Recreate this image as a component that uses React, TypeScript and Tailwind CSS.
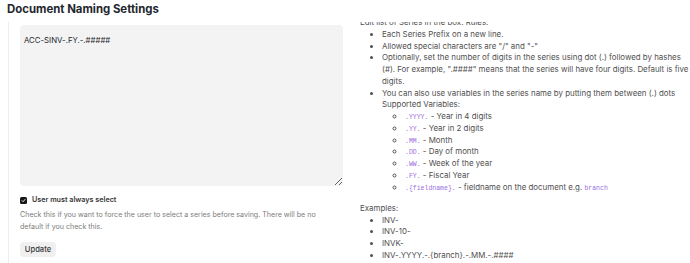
import { useState } from "react";

const font = "font-['Inter','Liberation_Sans',sans-serif]";
const code = "font-['Liberation_Mono',monospace] text-[6.5px] leading-none text-[#9d6fe0]";

const variables = [
  { key: ".YYYY.", label: "Year in 4 digits" },
  { key: ".YY.", label: "Year in 2 digits" },
  { key: ".MM.", label: "Month" },
  { key: ".DD.", label: "Day of month" },
  { key: ".WW.", label: "Week of the year" },
  { key: ".FY.", label: "Fiscal Year" },
];

const examples = ["INV-", "INV-10-", "INVK-", "INV-.YYYY.-.{branch}.-.MM.-.####"];

export default function App() {
  const [mustSelect, setMustSelect] = useState(true);

  return (
    <div className={`w-[690px] h-[263px] overflow-hidden bg-white ${font}`}>
      <div className="h-[22px] pl-[7px] text-[11.4px] leading-[18px] font-bold text-[#1f272e]">
        Document Naming Settings
      </div>

      <div className="flex">
        {/* left column */}
        <div className="ml-[8px] w-[336px] shrink-0 h-[241px] border-l border-[#ededed] pl-[11px] pt-[3px]">
          <textarea
            readOnly
            defaultValue="ACC-SINV-.FY.-.#####"
            className="block w-[323px] h-[161px] rounded-[4px] bg-[#f3f3f3] px-[4px] pt-[10px] text-[7.8px] leading-[11.75px] text-[#1f272e] outline-none"
          />

          <label className="mt-[9px] flex items-center gap-[5px] h-[11.75px]">
            <span
              onClick={() => setMustSelect(!mustSelect)}
              className={`flex w-[7px] h-[7px] items-center justify-center rounded-[1.5px] ${
                mustSelect ? "bg-[#171717]" : "border border-gray-400 bg-white"
              }`}
            >
              {mustSelect && (
                <svg width="5" height="5" viewBox="0 0 10 10" fill="none">
                  <path d="M2 5.2 4.2 7.4 8.2 2.8" stroke="white" strokeWidth="1.8" strokeLinecap="round" strokeLinejoin="round" />
                </svg>
              )}
            </span>
            <span className="text-[7.2px] font-semibold text-[#383838]">User must always select</span>
          </label>

          <p className="mt-[2px] w-[310px] text-[7.1px] leading-[11.8px] text-[#7c7c7c]">
            Check this if you want to force the user to select a series before saving. There will be no default if you
            check this.
          </p>

          <button className="mt-[10px] h-[15px] w-[36px] rounded-[4px] bg-[#f0f0f0] text-[7.6px] font-medium text-[#383838]">
            Update
          </button>
        </div>

        {/* right column, help text scrolled under the header */}
        <div className="ml-[16px] w-[330px] h-[241px] overflow-hidden">
          <div className="-mt-[5px] text-[7.9px] leading-[11.75px] text-[#4f4f4f]">
            <p>Edit list of Series in the box. Rules:</p>
            <ul className="list-disc pl-[22px]">
              <li>Each Series Prefix on a new line.</li>
              <li>Allowed special characters are "/" and "-"</li>
              <li>
                Optionally, set the number of digits in the series using dot (.) followed by hashes (#). For example,
                ".####" means that the series will have four digits. Default is five digits.
              </li>
              <li>
                You can also use variables in the series name by putting them between (.) dots
                <br />
                Supported Variables:
                <ul className="list-[circle] pl-[23px]">
                  {variables.map((v) => (
                    <li key={v.key}>
                      <span className={code}>{v.key}</span> - {v.label}
                    </li>
                  ))}
                  <li>
                    <span className={code}>.{"{fieldname}"}.</span> - fieldname on the document e.g.{" "}
                    <span className={code}>branch</span>
                  </li>
                </ul>
              </li>
            </ul>
            <p className="mt-[9.5px]">Examples:</p>
            <ul className="list-disc pl-[22px]">
              {examples.map((e) => (
                <li key={e}>{e}</li>
              ))}
            </ul>
          </div>
        </div>
      </div>
    </div>
  );
}
